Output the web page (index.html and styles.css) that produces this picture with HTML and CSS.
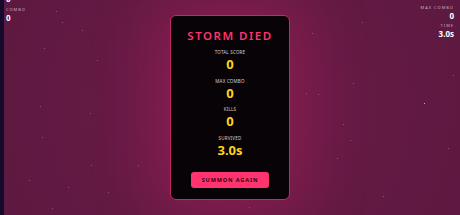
FILE: index.html
```html
<!DOCTYPE html>
<html lang="en">
<head>
  <meta charset="UTF-8" />
  <meta name="viewport" content="width=device-width, initial-scale=1" />
  <title>Storm Died</title>
  <link rel="stylesheet" href="styles.css">
</head>
<body>
  <div class="game">
    <div class="edge"></div>

    <div class="stars">
      <span class="star" style="left:56px;top:11px"></span>
      <span class="star" style="left:62px;top:22px"></span>
      <span class="star" style="left:82px;top:30px"></span>
      <span class="star" style="left:44px;top:48px"></span>
      <span class="star" style="left:97px;top:60px"></span>
      <span class="star" style="left:40px;top:106px"></span>
      <span class="star" style="left:42px;top:137px"></span>
      <span class="star" style="left:90px;top:113px"></span>
      <span class="star" style="left:91px;top:165px"></span>
      <span class="star" style="left:68px;top:187px"></span>
      <span class="star" style="left:108px;top:192px"></span>
      <span class="star" style="left:138px;top:165px"></span>
      <span class="star" style="left:29px;top:180px"></span>
      <span class="star" style="left:52px;top:208px"></span>
      <span class="star" style="left:362px;top:22px"></span>
      <span class="star" style="left:312px;top:33px"></span>
      <span class="star" style="left:353px;top:83px"></span>
      <span class="star" style="left:318px;top:94px"></span>
      <span class="star bright" style="left:424px;top:103px"></span>
      <span class="star" style="left:343px;top:124px"></span>
      <span class="star" style="left:350px;top:140px"></span>
      <span class="star" style="left:337px;top:158px"></span>
      <span class="star" style="left:383px;top:196px"></span>
      <span class="star" style="left:453px;top:75px"></span>
      <span class="star" style="left:306px;top:93px"></span>
      <span class="star" style="left:448px;top:148px"></span>
      <span class="star" style="left:249px;top:207px"></span>
    </div>

    <div class="hud hud-left">
      <div class="hud-value top-cut">0</div>
      <div class="hud-label">COMBO</div>
      <div class="hud-value">0</div>
    </div>

    <div class="hud hud-right">
      <div class="hud-label">MAX COMBO</div>
      <div class="hud-value">0</div>
      <div class="hud-label gap">TIME</div>
      <div class="hud-value">3.0s</div>
    </div>

    <div class="card">
      <h1>STORM DIED</h1>
      <div class="stats">
        <div class="stat">
          <div class="label">TOTAL SCORE</div>
          <div class="value">0</div>
        </div>
        <div class="stat">
          <div class="label">MAX COMBO</div>
          <div class="value">0</div>
        </div>
        <div class="stat">
          <div class="label">KILLS</div>
          <div class="value">0</div>
        </div>
        <div class="stat">
          <div class="label">SURVIVED</div>
          <div class="value big">3.0s</div>
        </div>
      </div>
      <button type="button" class="again-btn">SUMMON AGAIN</button>
    </div>
  </div>
</body>
</html>
```

FILE: styles.css
```css
body {
  margin: 0;
  padding: 0;
  font-family: 'Noto Sans', 'Open Sans', sans-serif;
  background: #631a44;
  overflow: hidden;
}

.game {
  position: relative;
  width: 460px;
  height: 215px;
  display: flex;
  align-items: center;
  justify-content: center;
  background: radial-gradient(circle at 50% 50%, #7a1e4e 0%, #6a1b47 30%, #621a43 60%, #5d1941 100%);
  overflow: hidden;
}

.edge {
  position: absolute;
  left: 0;
  top: 0;
  bottom: 0;
  width: 4px;
  background: #160a2a;
}

.star {
  position: absolute;
  width: 1px;
  height: 1px;
  background: rgba(255, 220, 235, 0.3);
}

.star.bright {
  background: rgba(255, 230, 240, 0.7);
}

.hud {
  position: absolute;
  color: #fff;
}

.hud-left {
  left: 6px;
  top: -6px;
}

.hud-right {
  right: 6px;
  top: 3px;
  text-align: right;
}

.hud-label {
  font-size: 4px;
  line-height: 6px;
  letter-spacing: 1px;
  color: #c9a9bc;
  margin-top: 2px;
}

.hud-label.gap {
  margin-top: 3px;
}

.hud-value {
  font-size: 8px;
  line-height: 9px;
  font-weight: 700;
}

.top-cut {
  margin-bottom: 4px;
}

.card {
  position: relative;
  width: 118px;
  height: 183px;
  background: #080306;
  border: 1px solid #c32a60;
  border-radius: 6px;
  box-shadow: 0 0 60px 16px rgba(190, 35, 95, 0.32);
  display: flex;
  flex-direction: column;
  align-items: center;
}

h1 {
  margin: 12px 0 4px;
  font-size: 11.5px;
  line-height: 16px;
  font-weight: 600;
  letter-spacing: 1.5px;
  color: #ff346f;
}

.stats {
  display: flex;
  flex-direction: column;
  gap: 4.7px;
  align-items: center;
}

.stat {
  text-align: center;
}

.label {
  font-size: 4.5px;
  line-height: 8px;
  color: #d8d0d4;
  letter-spacing: 0.2px;
}

.value {
  font-size: 13px;
  line-height: 16px;
  font-weight: 700;
  color: #ffd21c;
}

.value.big {
  font-size: 13px;
}

.again-btn {
  margin-top: 14px;
  width: 78px;
  height: 16px;
  padding: 0;
  border: none;
  border-radius: 3px;
  background: #ff336f;
  color: #2a0614;
  font-family: inherit;
  font-size: 5.5px;
  font-weight: 700;
  letter-spacing: 0.9px;
}
```
